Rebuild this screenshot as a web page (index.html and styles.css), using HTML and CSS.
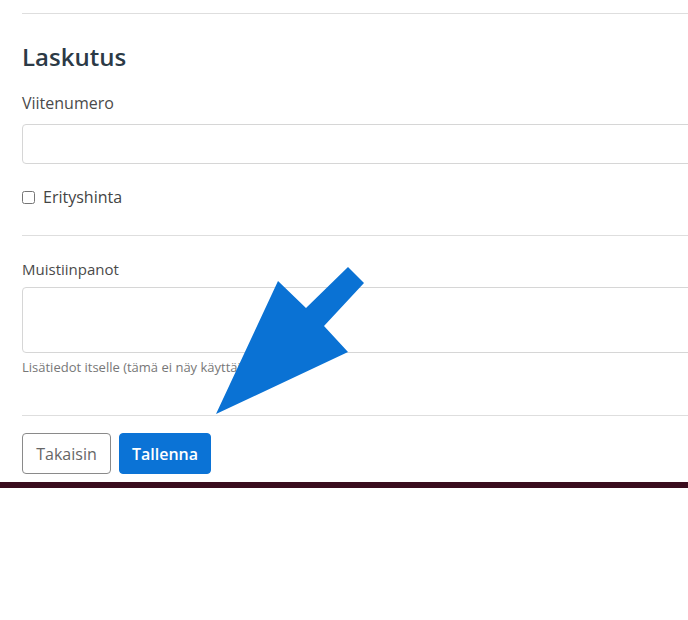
FILE: index.html
```html
<!DOCTYPE html>
<html lang="fi">
<head>
<meta charset="utf-8">
<title>Laskutus</title>
<link rel="stylesheet" href="styles.css">
</head>
<body>
<div class="page">
  <form class="form">
    <hr class="sep sep-top">
    <h2 class="title">Laskutus</h2>
    <label class="lbl" for="ref">Viitenumero</label>
    <input class="field" id="ref" type="text">
    <div class="check">
      <input type="checkbox" id="special" class="box">
      <label for="special" class="check-lbl">Erityshinta</label>
    </div>
    <hr class="sep sep-mid">
    <label class="lbl lbl-small" for="notes">Muistiinpanot</label>
    <textarea class="field area" id="notes"></textarea>
    <div class="help">Lisätiedot itselle (tämä ei näy käyttäjälle)</div>
    <hr class="sep sep-bottom">
    <div class="actions">
      <button type="button" class="btn btn-back">Takaisin</button>
      <button type="button" class="btn btn-save">Tallenna</button>
    </div>
  </form>
  <div class="bar"></div>
  <svg class="arrow" width="688" height="620" viewBox="0 0 688 620" aria-hidden="true">
    <polygon points="216,414 278,281 306,308 348,267 364,283 324,326 348,352" fill="#0a72d4"/>
  </svg>
</div>
</body>
</html>
```

FILE: styles.css
```css
html, body {
  margin: 0;
  padding: 0;
  background: #ffffff;
}
.page {
  position: relative;
  width: 688px;
  height: 620px;
  overflow: hidden;
  font-family: "Open Sans", "Noto Sans", sans-serif;
  color: #444;
}
.form {
  width: 720px;
  padding-left: 22px;
  display: flex;
  flex-direction: column;
  align-items: stretch;
}
.sep {
  border: 0;
  border-top: 1px solid #dedede;
  margin: 0;
  height: 0;
}
.sep-top { margin-top: 13px; }
.sep-mid { margin-top: 26px; }
.sep-bottom { margin-top: 40px; }
.title {
  margin: 27px 0 0;
  font-size: 24px;
  line-height: 32px;
  font-weight: 600;
  color: #2c3a46;
}
.lbl {
  margin-top: 18px;
  font-size: 16px;
  line-height: 24px;
  color: #4a4a4a;
}
.lbl-small {
  margin-top: 23px;
  font-size: 15px;
  line-height: 20px;
}
.field {
  display: block;
  box-sizing: border-box;
  margin-top: 9px;
  height: 40px;
  border: 1px solid #d6d6d6;
  border-radius: 4px;
  background: #fff;
  font: inherit;
  outline: none;
}
.area {
  margin-top: 8px;
  height: 66px;
  resize: none;
}
.check {
  margin-top: 21px;
  display: flex;
  align-items: center;
  gap: 8px;
  height: 24px;
}
.box {
  margin: 0;
  width: 13px;
  height: 13px;
}
.check-lbl {
  font-size: 16px;
  line-height: 24px;
  color: #444;
}
.help {
  margin-top: 6px;
  font-size: 13px;
  line-height: 16px;
  color: #777;
}
.actions {
  margin-top: 17px;
  display: flex;
  gap: 8px;
}
.btn {
  box-sizing: border-box;
  height: 41px;
  padding: 0 10px;
  border-radius: 4px;
  font-family: inherit;
  font-size: 16px;
  cursor: pointer;
}
.btn-back {
  width: 89px;
  background: #fff;
  border: 1px solid #8a8a8a;
  color: #666;
}
.btn-save {
  width: 92px;
  background: #0b73d6;
  border: 1px solid #0b73d6;
  color: #fff;
  font-weight: 600;
}
.bar {
  margin-top: 8px;
  height: 6px;
  background: #3a0d1e;
}
.arrow {
  position: absolute;
  left: 0;
  top: 0;
  pointer-events: none;
}
```
